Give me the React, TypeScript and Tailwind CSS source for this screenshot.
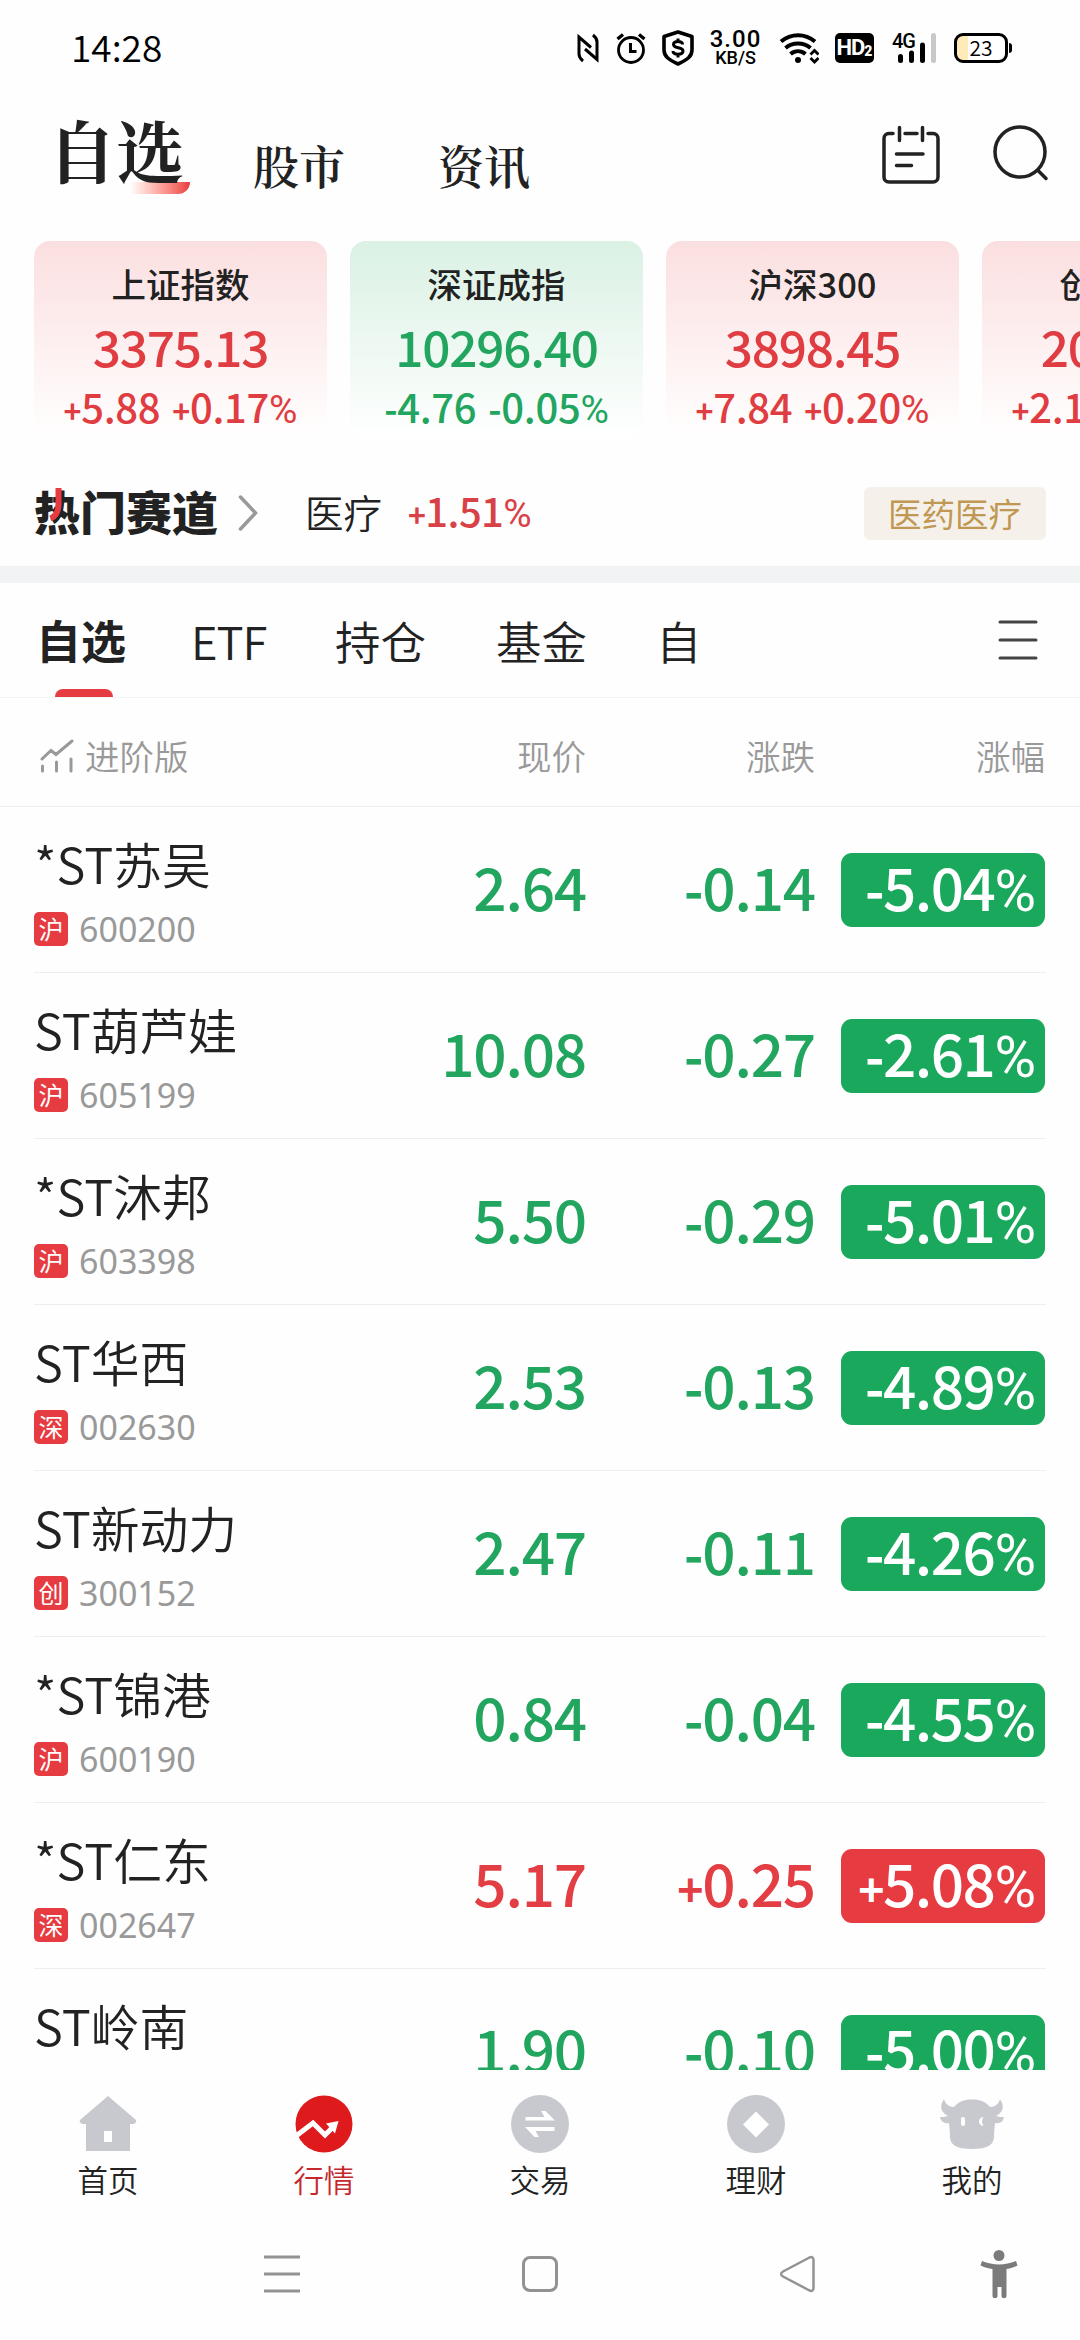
import type { ReactNode } from "react";

interface IndexCard {
  name: string;
  value: string;
  change: string;
  percent: string;
  up: boolean;
}

interface Stock {
  name: string;
  market: string;
  code: string;
  price: string;
  change: string;
  percent: string;
  up: boolean;
}

const indices: IndexCard[] = [
  { name: "上证指数", value: "3375.13", change: "+5.88", percent: "+0.17", up: true },
  { name: "深证成指", value: "10296.40", change: "-4.76", percent: "-0.05", up: false },
  { name: "沪深300", value: "3898.45", change: "+7.84", percent: "+0.20", up: true },
  { name: "创业板指", value: "2048.39", change: "+2.12", percent: "+0.10", up: true },
];

const stocks: Stock[] = [
  { name: "*ST苏吴", market: "沪", code: "600200", price: "2.64", change: "-0.14", percent: "-5.04", up: false },
  { name: "ST葫芦娃", market: "沪", code: "605199", price: "10.08", change: "-0.27", percent: "-2.61", up: false },
  { name: "*ST沐邦", market: "沪", code: "603398", price: "5.50", change: "-0.29", percent: "-5.01", up: false },
  { name: "ST华西", market: "深", code: "002630", price: "2.53", change: "-0.13", percent: "-4.89", up: false },
  { name: "ST新动力", market: "创", code: "300152", price: "2.47", change: "-0.11", percent: "-4.26", up: false },
  { name: "*ST锦港", market: "沪", code: "600190", price: "0.84", change: "-0.04", percent: "-4.55", up: false },
  { name: "*ST仁东", market: "深", code: "002647", price: "5.17", change: "+0.25", percent: "+5.08", up: true },
  { name: "ST岭南", market: "深", code: "002717", price: "1.90", change: "-0.10", percent: "-5.00", up: false },
];

// Sign and percent mark are set a little smaller than the digits.
function Signed({ value, percent }: { value: string; percent?: boolean }) {
  const sign = value[0];

  return (
    <>
      <span className={sign === "-" ? "text-[0.9em] font-bold" : "text-[0.76em] font-bold"}>{sign}</span>
      {value.slice(1)}
      {percent && <span className="font-['Roboto'] text-[0.97em] font-normal tracking-normal">%</span>}
    </>
  );
}

function StatusBar() {
  return (
    <div className="flex h-24 items-center pl-[71px] text-black">
      <span className="w-[506px] pb-[4px] text-[37px] font-[350] leading-[56px]">14:28</span>
      <svg className="h-[30px] w-[22px]" viewBox="0 0 22 30" fill="none" stroke="#000" strokeWidth="3">
        <path d="M6 28C3.500 26 2 24 2 21V4L14 14.500M8 16l12 10.500V9c0-3-1.500-5-4-7" />
      </svg>
      <svg className="ml-[17px] h-[32px] w-[30px]" viewBox="0 0 30 32" fill="none" stroke="#000" strokeWidth="2.800">
        <circle cx="15" cy="18" r="12.500" />
        <path d="M14.500 11v8.500h6" strokeWidth="3" />
        <path d="M1.500 7 7 2.500M28.500 7 23 2.500" strokeWidth="3.400" />
      </svg>
      <svg className="ml-[16px] h-[36px] w-[32px]" viewBox="0 0 32 36" fill="none" stroke="#000">
        <path d="M16 2 30 6.500V20c0 6-4 9.500-14 14C6 29.500 2 26 2 20V6.500Z" strokeWidth="3.600" strokeLinejoin="round" />
        <path d="M20.500 14.500c0-2-2-3-4.500-3s-4.500 1-4.500 3c0 4.500 9.500 2 9.500 6.500 0 2.200-2 3.200-5 3.200s-5-1.200-5-3.200M16 8.500v3M16 24v3.500" strokeWidth="3" />
      </svg>
      <div className="ml-[14px] flex w-[55px] flex-col items-center font-['Roboto'] font-medium">
        <span className="text-[24px] leading-[20px] tracking-[1px]">3.00</span>
        <span className="text-[18px] leading-[18px]">KB/S</span>
      </div>
      <svg className="ml-[16px] h-[32px] w-[40px]" viewBox="0 0 40 32" fill="none" stroke="#000" strokeWidth="4">
        <path d="M2 9.500C12 1 26 1 36 9.500M6.500 16c7-6 18-6 25 0M11.500 22c4.500-3.800 10.500-3.800 15 0" />
        <circle cx="19" cy="28" r="3" fill="#000" stroke="none" />
        <path d="m31.500 22.500 4-4 4 4M31.500 26l4 4 4-4" strokeWidth="2.800" />
      </svg>
      <div className="ml-[16px] flex h-[30px] w-[39px] items-center justify-center rounded-[5px] bg-black font-['Roboto'] text-[22px] font-bold leading-none text-white">
        <span className="tracking-[-1px]">HD</span>
        <span className="pt-[6px] text-[14px] font-black">2</span>
      </div>
      <div className="relative ml-[18px] h-[30px] w-[45px]">
        <svg className="h-[30px] w-[45px]" viewBox="0 0 45 30">
          <path d="M8.500 23.500v4M19.500 20v7.500M30.500 12v15.500" stroke="#000" strokeWidth="5" strokeLinecap="round" />
          <path d="M41.500 2.500v25" stroke="#c8c8c8" strokeWidth="5" strokeLinecap="round" />
        </svg>
        <span className="absolute left-0 top-0 font-['Roboto'] text-[20px] font-medium leading-[16px] tracking-[-1px]">4G</span>
      </div>
      <div className="ml-[17px] flex items-center">
        <div className="flex h-[30px] w-[54px] items-center justify-center rounded-[9px] border-[3px] border-black bg-[linear-gradient(90deg,#ffebb8_11px,#fff_11px)]">
          <span className="pb-[2px] text-[21px] font-[350] leading-[22px]">23</span>
        </div>
        <span className="ml-px h-[10px] w-[3px] rounded-r bg-black" />
      </div>
    </div>
  );
}

function MainHeader() {
  return (
    <div className="flex h-[145px] items-start pl-12 font-['Noto_Serif_CJK_SC','Noto_Sans_CJK_SC',serif] font-semibold text-[#222]">
      <div className="relative w-[205px] pt-[5px]">
        <span className="absolute left-[82px] top-[86px] h-[12px] w-[60px] rounded-br-[14px] bg-linear-to-r from-white to-[#e8393e]" />
        <span className="relative text-[68px] font-bold leading-[96px]">自选</span>
      </div>
      <span className="w-[185px] pt-[36px] text-[46px] leading-[64px]">股市</span>
      <span className="w-[443px] pt-[36px] text-[46px] leading-[64px]">资讯</span>
      <svg className="mt-[25px] h-[64px] w-[60px]" viewBox="0 0 60 64" fill="none" stroke="#222" strokeWidth="3.500" strokeLinecap="round">
        <path d="M12 12.500H8c-3 0-5 2-5 5V56c0 3 2 5 5 5h44c3 0 5-2 5-5V17.500c0-3-2-5-5-5h-5M24 12.500h12M18.500 6.500v13M41.500 6.500v13M15.500 33h26.500M15.500 44.500h15" />
      </svg>
      <svg className="ml-[52px] mt-[29px] h-[58px] w-[56px]" viewBox="0 0 56 58" fill="none" stroke="#222" strokeWidth="3.500" strokeLinecap="round">
        <circle cx="27" cy="27" r="25" />
        <path d="m45 45.500 8 8" />
      </svg>
    </div>
  );
}

function IndexCards() {
  return (
    <div className="flex h-[199px] gap-[23px] overflow-hidden pl-[34px]">
      {indices.map((item) => (
        <div
          key={item.name}
          className={`flex w-[293px] shrink-0 flex-col items-center rounded-[16px] bg-linear-to-b to-white ${
            item.up ? "from-[#fbdfe0] text-[#df3d42]" : "from-[#daf1e4] text-[#22a55e]"
          }`}
        >
          <span className="mt-[17px] text-[34.500px] font-medium leading-[50px] text-[#222]">{item.name}</span>
          <span className="mt-[9px] text-[49.500px] font-medium leading-[58px] tracking-[-1.200px]">{item.value}</span>
          <span className="mt-[7px] flex gap-[12px] whitespace-nowrap text-[40px] font-medium leading-[48px] tracking-[-0.300px]">
            <span>
              <Signed value={item.change} />
            </span>
            <span>
              <Signed value={item.percent} percent />
            </span>
          </span>
        </div>
      ))}
    </div>
  );
}

function HotTrack() {
  return (
    <div className="mt-5 flex h-[106px] items-center px-[34px]">
      <div className="relative pb-[6px] text-[46px] font-black leading-[60px] text-[#222]">
        热门赛道
        <svg className="absolute left-[14px] top-[8px] h-[33px] w-[14px]" viewBox="0 0 14 33" fill="none">
          <path d="M10.500 0v16c0 7-2 12-8 14.500" stroke="#e63b40" strokeWidth="6" />
        </svg>
      </div>
      <svg className="ml-[20px] h-[36px] w-[20px]" viewBox="0 0 20 36" fill="none" stroke="#999" strokeWidth="3.500" strokeLinecap="round">
        <path d="m2.500 2 15 16-15 16" />
      </svg>
      <span className="ml-[47px] pb-[3px] text-[38.500px] font-[350] text-[#222]">医疗</span>
      <span className="ml-[26px] pb-[2px] text-[40px] font-medium tracking-[-0.600px] text-[#d84146]">
        <Signed value="+1.51" percent />
      </span>
      <span className="ml-auto flex h-[53px] w-[182px] items-center justify-center rounded-[6px] bg-[#f5f1ea] pb-[1px] text-[33.500px] leading-none text-[#c09853]">
        医药医疗
      </span>
    </div>
  );
}

function Tabs() {
  return (
    <div className="flex h-[115px] items-center border-b border-[#f2f3f5] pl-[36px] text-[45.500px] font-[350] text-[#222]">
      <div className="relative flex h-full items-center">
        <span className="text-[45px] font-bold">自选</span>
        <span className="absolute bottom-0 left-[19px] h-[8px] w-[58px] rounded-t-full rounded-b-[3px] bg-[#e63b40]" />
      </div>
      <span className="ml-[65px] w-[79px] tracking-[-1px]">ETF</span>
      <span className="ml-[65px]">持仓</span>
      <span className="ml-[70px]">基金</span>
      <span className="ml-[69px]">自</span>
      <svg className="ml-auto mr-[42px] h-[42px] w-[40px]" viewBox="0 0 40 42" stroke="#444" strokeWidth="3" strokeLinecap="round">
        <path d="M2 3h36M2 21h36M2 39h36" />
      </svg>
    </div>
  );
}

const rowGrid = "grid grid-cols-[320px_232px_229px_230px] pl-[34px]";

function TableHeader() {
  return (
    <div className={`${rowGrid} h-[109px] items-center border-b border-[#eceef0] pt-[7px] text-right text-[34.500px] font-[350] text-[#999]`}>
      <div className="flex items-center">
        <svg className="ml-[6px] mr-[11px] h-[34px] w-[34px]" viewBox="0 0 34 34" fill="none" stroke="#999" strokeWidth="3" strokeLinecap="round">
          <path d="m2 20 9-8.500 5 4L32 2M2.500 27v5M16.500 23v9M31 20v12" />
        </svg>
        <span>进阶版</span>
      </div>
      <span>现价</span>
      <span>涨跌</span>
      <span>涨幅</span>
    </div>
  );
}

function StockRow({ stock }: { stock: Stock }) {
  const color = stock.up ? "text-[#e23e43]" : "text-[#22a55e]";

  return (
    <div className="relative h-[166px] shrink-0">
      <div className={`${rowGrid} text-right text-[58.500px] font-medium leading-[74px] tracking-[-1.200px]`}>
        <div className="pt-[26px] text-left tracking-normal">
          <div className="text-[48.800px] font-[350] leading-[60px] text-[#222]">{stock.name}</div>
          <div className="mt-[19px] flex items-center">
            <span className="flex h-[34px] w-[34px] items-center justify-center rounded-[5px] bg-[#e63b40] pb-[2px] text-[25px] font-normal leading-none text-white">
              {stock.market}
            </span>
            <span className="ml-[11px] font-['Noto_Sans'] text-[34px] font-normal leading-[34px] text-[#999]">
              {stock.code}
            </span>
          </div>
        </div>
        <span className={`pt-[42px] ${color}`}>{stock.price}</span>
        <span className={`pt-[42px] ${color}`}>
          <Signed value={stock.change} />
        </span>
        <div
          className={`ml-auto mt-[46px] h-[74px] w-[204px] rounded-[11px] pr-[9px] text-white ${
            stock.up ? "bg-[#e63b40]" : "bg-[#1aa85c]"
          }`}
        >
          <div className="-mt-[4px] whitespace-nowrap tracking-[-1.500px]">
            <Signed value={stock.percent} percent />
          </div>
        </div>
      </div>
      <div className="absolute bottom-0 left-[34px] right-[34px] h-px bg-[#eceef0]" />
    </div>
  );
}

function NavItem({ label, active, children }: { label: string; active?: boolean; children: ReactNode }) {
  return (
    <div className="flex w-[216px] flex-col items-center pt-[25px]">
      <svg className="h-[58px] w-[64px]" viewBox="0 0 64 58" fill="none">
        {children}
      </svg>
      <span className={`mt-[6px] text-[30.500px] font-[350] leading-[40px] ${active ? "text-[#c3282d]" : "text-[#222]"}`}>
        {label}
      </span>
    </div>
  );
}

function BottomNav() {
  return (
    <div className="flex h-[138px]">
      <NavItem label="首页">
        <path d="M32 1 60 25c1 1.500-1 4-3 4h-3v27H10V29H7c-2 0-4-2.500-3-4Z" fill="#c8c9ce" />
        <path d="M28 36h8v11h-8z" fill="#fff" />
      </NavItem>
      <NavItem label="行情" active>
        <circle cx="32" cy="29" r="28.500" fill="#de1a1c" />
        <path d="M4 41 21 28l12 12 8-8" stroke="#fff" strokeWidth="5" />
        <path d="M34 28.500 46.500 26 43 38.500Z" fill="#fff" />
      </NavItem>
      <NavItem label="交易">
        <circle cx="32" cy="29" r="29" fill="#c8c9ce" />
        <path d="M17.500 22h19l-3.500-6h4.500l9.500 9.500H17.500zM46.500 36h-19l3.500 6h-4.500L17 32h29.500z" fill="#fff" />
      </NavItem>
      <NavItem label="理财">
        <circle cx="32" cy="29" r="29" fill="#c8c9ce" />
        <path d="m32 16.500 13 13-13 13-13-13z" fill="#fff" />
      </NavItem>
      <NavItem label="我的">
        <path
          d="M4 4C-1 12 1 17 8 21c-3 1-6 1-8 1 1 5 5 7 9 6l1 11c-1 10 5 15 22 15s23-5 22-15l1-11c5 1 8-1 9-6-2 0-5 0-8-1 7-4 9-9 4-17-1 4-4 8-10 8C45 6 39 4.500 32 4.500S19 6 14 12C8 12 5 8 4 4Z"
          fill="#c8c9ce"
        />
        <rect x="21" y="22" width="4" height="9" rx="2" fill="#fff" />
        <path d="M43.500 22c-6 0-6 9 0 9-2-3-2-6 0-9Z" fill="#fff" />
      </NavItem>
    </div>
  );
}

function SystemBar() {
  return (
    <div className="flex h-[132px] items-center pl-[264px]">
      <svg className="h-[38px] w-[36px]" viewBox="0 0 36 38" stroke="#929292" strokeWidth="3">
        <path d="M0 2h36M0 19h36M0 36h36" />
      </svg>
      <span className="ml-[222px] h-[36px] w-[36px] rounded-[8px] border-[3px] border-[#929292]" />
      <svg className="ml-[221px] h-[38px] w-[38px]" viewBox="0 0 38 38" fill="none" stroke="#929292" strokeWidth="2.500" strokeLinejoin="round">
        <path d="M30.500 2.500 4 16.500c-2.500 1.500-2.500 3.500 0 5l26.500 14c2.500 1 4 0 4-2.500V5c0-2.500-1.500-3.500-4-2.500Z" />
      </svg>
      <svg className="ml-[163px] h-[50px] w-[38px]" viewBox="0 0 38 50" fill="#7b7b7b">
        <circle cx="19" cy="6.500" r="5.500" />
        <path d="M2 12c11 4.500 23 4.500 34 0l1.500 4.500C34 18.500 30 19.500 26.500 20v27c0 3-5 3-5 0v-9h-4v9c0 3-5 3-5 0V20C8.500 19.500 4 18.500.5 16.500Z" />
      </svg>
    </div>
  );
}

export default function App() {
  return (
    <div className="flex h-[2340px] w-[1080px] flex-col overflow-hidden bg-[#fefefe] font-['Noto_Sans_CJK_SC',sans-serif]">
      <StatusBar />
      <MainHeader />
      <IndexCards />
      <HotTrack />
      <div className="h-[17px] bg-[#f2f3f5]" />
      <Tabs />
      <TableHeader />
      <div className="flex h-[1263px] flex-col overflow-hidden">
        {stocks.map((stock) => (
          <StockRow key={stock.code} stock={stock} />
        ))}
      </div>
      <BottomNav />
      <SystemBar />
    </div>
  );
}
